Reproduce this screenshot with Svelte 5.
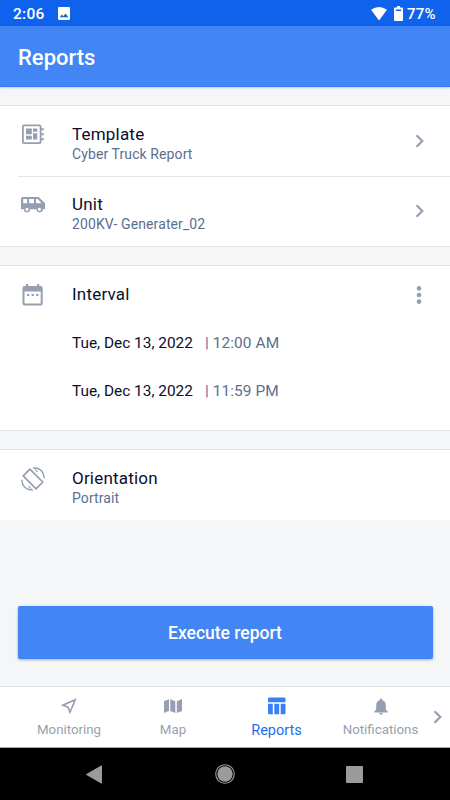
<script lang="ts">
    const tabs = [
        { id: 'monitoring', label: 'Monitoring' },
        { id: 'map', label: 'Map' },
        { id: 'reports', label: 'Reports' },
        { id: 'notifications', label: 'Notifications' },
    ];

    const interval = [
        { date: 'Tue, Dec 13, 2022', time: '12:00 AM' },
        { date: 'Tue, Dec 13, 2022', time: '11:59 PM' },
    ];

    let activeTab = $state('reports');
</script>

{#snippet chevron()}
    <svg class="chevron" width="10" height="14" viewBox="0 0 10 14">
        <path d="M1.5 1.2 7.3 7 1.5 12.8" fill="none" stroke="currentColor" stroke-width="2.2" />
    </svg>
{/snippet}

<div class="screen">
    <div class="status-bar">
        <span class="clock">2:06</span>
        <svg class="picture" width="12" height="13" viewBox="0 0 12 13">
            <path fill-rule="evenodd" fill="#fff" d="M1.3 0h9.4Q12 0 12 1.3v10.4q0 1.3-1.3 1.3H1.3Q0 13 0 11.7V1.3Q0 0 1.3 0ZM1.8 10.3h8.6L7.6 6.4 5.4 9.2 3.9 7.4Z" />
        </svg>
        <div class="status-right">
            <svg class="wifi" width="16" height="14" viewBox="0 0 16 14">
                <path fill="#fff" d="M0 2.8Q8-2.8 16 2.8L8 13.6Z" />
            </svg>
            <svg class="battery" width="9" height="15" viewBox="0 0 9 15">
                <path fill="#fff" fill-rule="evenodd" d="M3 0h3v1.4h2q1 0 1 1V14q0 1-1 1H1q-1 0-1-1V2.4q0-1 1-1h2ZM1.8 3.5V5h5.4V3.5Z" />
            </svg>
            <span class="charge">77%</span>
        </div>
    </div>

    <header class="header">
        <h1>Reports</h1>
    </header>

    <main class="content">
        <section class="card">
            <div class="row">
                <div class="row-icon">
                    <svg width="24" height="24" viewBox="0 0 24 24">
                        <path fill="none" stroke="currentColor" stroke-width="1.8" d="M2.9 2.4h15.7q1 0 1 1v15.7q0 1-1 1H2.9q-1 0-1-1V3.4q0-1 1-1Z" />
                        <path fill="currentColor" d="M5 5.6h5.8v5.6H5ZM12 5.6h4.3v3.2H12ZM5 12.8h5.8v3.6H5ZM12 10.2h4.3v6.2H12ZM20 5.2h2.8v2H20ZM20 10.2h2.8v2H20ZM20 15.2h2.8v2H20Z" />
                    </svg>
                </div>
                <div class="row-text">
                    <div class="title">Template</div>
                    <div class="subtitle">Cyber Truck Report</div>
                </div>
                {@render chevron()}
            </div>
            <div class="divider"></div>
            <div class="row">
                <div class="row-icon">
                    <svg width="24" height="24" viewBox="0 0 24 24">
                        <path fill="currentColor" fill-rule="evenodd" d="M2 4h15.5L24 10v6.3h-2.2a3 3 0 0 1-6 0H9a3 3 0 0 1-6 0H0V6q0-2 2-2ZM2.2 6v4.3h4V6ZM8.2 6v4.3H13V6ZM15 6v4.3h5.6L16.8 6Z" />
                        <circle cx="6" cy="16.3" r="2.3" fill="#fff" stroke="currentColor" stroke-width="1.4" />
                        <circle cx="18.4" cy="16.3" r="2.3" fill="#fff" stroke="currentColor" stroke-width="1.4" />
                    </svg>
                </div>
                <div class="row-text">
                    <div class="title">Unit</div>
                    <div class="subtitle">200KV- Generater_02</div>
                </div>
                {@render chevron()}
            </div>
        </section>

        <section class="card interval">
            <div class="row interval-head">
                <div class="row-icon">
                    <svg width="24" height="24" viewBox="0 0 24 24">
                        <path fill="currentColor" fill-rule="evenodd" d="M5 1h2.2v2h8.8V1h2.2v2h1.5q2 0 2 2v15.5q0 2-2 2H3.5q-2 0-2-2V5q0-2 2-2H5ZM3.5 8.5v12h16.2v-12Z" />
                        <path fill="currentColor" d="M6 11.1h2.2v2H6ZM10.6 11.1h2.2v2h-2.2ZM15.2 11.1h2.2v2h-2.2Z" />
                    </svg>
                </div>
                <div class="row-text">
                    <div class="title">Interval</div>
                </div>
                <svg class="more" width="6" height="20" viewBox="0 0 6 20">
                    <circle cx="3" cy="3.4" r="2.3" fill="currentColor" />
                    <circle cx="3" cy="10" r="2.3" fill="currentColor" />
                    <circle cx="3" cy="16.6" r="2.3" fill="currentColor" />
                </svg>
            </div>
            {#each interval as moment}
                <div class="moment">
                    <span class="date">{moment.date}</span>
                    <span class="time">| {moment.time}</span>
                </div>
            {/each}
        </section>

        <section class="card last">
            <div class="row">
                <div class="row-icon">
                    <svg width="24" height="24" viewBox="0 0 24 24">
                        <g fill="none" stroke="currentColor" stroke-width="1.4">
                            <path stroke-width="1.7" d="M8.9 2.1 21.8 15 15.1 21.8 2.2 8.9Z" stroke-linejoin="round" />
                            <path d="M12.2.8Q22.5 1 23.3 11.2" />
                            <path d="M11.8 23.2Q1.5 23 .7 12.8" />
                        </g>
                        <path fill="currentColor" d="M12 0 17 4.4l-1 1ZM12 24 7 19.6l1-1Z" />
                    </svg>
                </div>
                <div class="row-text">
                    <div class="title">Orientation</div>
                    <div class="subtitle">Portrait</div>
                </div>
            </div>
        </section>

        <button class="execute">Execute report</button>
    </main>

    <nav class="tabs">
        {#each tabs as tab (tab.id)}
            <button class="tab" class:active={activeTab === tab.id} onclick={() => (activeTab = tab.id)}>
                <span class="tab-icon">
                    {#if tab.id === 'monitoring'}
                        <svg width="16" height="16" viewBox="0 0 16 16">
                            <path fill="none" stroke="currentColor" stroke-width="1.6" d="M14.2 1.8 1.8 7.2 7 9.2 9 14.3Z" />
                        </svg>
                    {:else if tab.id === 'map'}
                        <svg width="18" height="16" viewBox="0 0 18 16">
                            <path fill="currentColor" d="M0 3.2 5 1.3v11.5L0 15ZM6.3 1.3l5 1.9V15l-5-2.1ZM12.8 3.2 18 1v12l-5.2 2Z" />
                        </svg>
                    {:else if tab.id === 'reports'}
                        <svg width="18" height="18" viewBox="0 0 18 18">
                            <path fill="currentColor" d="M1.3.5h14.9q1.3 0 1.3 1.3v3.4H0V1.8Q0 .5 1.3.5ZM0 6.7h4.8v10.5H1.3Q0 17.2 0 15.9ZM6.3 6.7h4.9v10.5H6.3ZM12.7 6.7h4.8v9.2q0 1.3-1.3 1.3h-3.5Z" />
                        </svg>
                    {:else}
                        <svg width="14" height="17" viewBox="0 0 14 17">
                            <path fill="currentColor" d="M5.8 2.2V1.6a1.2 1.2 0 0 1 2.4 0v.6q3.6.8 3.6 5v4.3l1.9 2v.9H.3v-.9l1.9-2V7.2q0-4.2 3.6-5ZM5.3 15h3.4a1.7 1.7 0 0 1-3.4 0Z" />
                        </svg>
                    {/if}
                </span>
                <span class="tab-label">{tab.label}</span>
            </button>
        {/each}
        <div class="tabs-more">
            {@render chevron()}
        </div>
    </nav>

    <div class="system-nav">
        <svg width="16" height="19" viewBox="0 0 16 19">
            <path fill="#9b9b9b" d="M15.2.6q.8-.4.8.6v16.6q0 1-.8.6L.5 10.1Q-.5 9.5.5 8.9Z" />
        </svg>
        <svg class="home" width="20" height="20" viewBox="0 0 20 20">
            <circle cx="10" cy="10" r="9.3" fill="none" stroke="#9b9b9b" stroke-width="1.1" />
            <circle cx="10" cy="10" r="7.7" fill="#9b9b9b" />
        </svg>
        <svg width="17" height="17" viewBox="0 0 17 17">
            <rect width="17" height="17" rx="1" fill="#9b9b9b" />
        </svg>
    </div>
</div>

<style>
    :global(body) {
        margin: 0;
    }

    .screen {
        display: flex;
        flex-direction: column;
        width: 450px;
        height: 800px;
        overflow: hidden;
        box-sizing: border-box;
        background: #f5f6f8;
        color: #0a0e2c;
        font-family: Roboto, "Liberation Sans", sans-serif;
    }

    svg {
        display: block;
        flex: none;
    }

    button {
        border: 0;
        padding: 0;
        font-family: inherit;
    }

    .status-bar {
        display: flex;
        align-items: center;
        flex: none;
        height: 26px;
        padding: 1px 13px 0;
        box-sizing: border-box;
        background: #0e62eb;
        color: #fff;
        font-size: 15.5px;
        font-weight: 500;
    }

    .clock {
        width: 45px;
        letter-spacing: 0.3px;
    }

    .status-right {
        display: flex;
        align-items: center;
        margin-left: auto;
    }

    .wifi {
        margin-right: 1px;
    }

    .battery {
        margin: 0 4px 0 6px;
    }

    .charge {
        width: 30px;
        font-size: 15px;
        letter-spacing: 0.2px;
        white-space: nowrap;
    }

    .header {
        display: flex;
        align-items: center;
        flex: none;
        height: 61px;
        padding: 3px 18px 0;
        box-sizing: border-box;
        background: #4286f5;
        border-bottom: 1px solid #2f7cf6;
        box-shadow: 0 1px 2px rgba(0, 0, 0, 0.18);
        color: #fff;
    }

    h1 {
        margin: 0;
        font-size: 22px;
        font-weight: 500;
    }

    .content {
        display: flex;
        flex-direction: column;
        flex: 1;
        padding-top: 18px;
    }

    .card {
        margin-bottom: 18px;
        background: #fff;
        border-top: 1px solid #dfe1e5;
        border-bottom: 1px solid #e4e6ea;
    }

    .card.last {
        margin-bottom: 0;
        border-bottom: 0;
    }

    .row {
        display: flex;
        height: 70px;
        padding: 17px 25px 0 21px;
        box-sizing: border-box;
        color: #959fb0;
    }

    .row-icon {
        width: 51px;
    }

    .row-text {
        flex: 1;
    }

    .title {
        color: #0a0e2c;
        font-size: 17px;
        line-height: 22px;
        letter-spacing: 0.2px;
    }

    .subtitle {
        color: #5b6f8e;
        font-size: 14px;
        line-height: 18px;
        letter-spacing: 0.1px;
    }

    .row .chevron {
        margin-top: 11px;
    }

    .divider {
        height: 1px;
        margin: 0 0 -1px 18px;
        background: #e2e5ea;
    }

    .interval {
        height: 164px;
    }

    .interval-head {
        height: 53px;
    }

    .more {
        margin: 2px 3px 0 0;
    }

    .moment {
        display: flex;
        height: 47.5px;
        padding-left: 72px;
        font-size: 15.4px;
        line-height: 48px;
    }

    .date {
        width: 133px;
    }

    .time {
        color: #5b6f8e;
        letter-spacing: 0.1px;
    }

    .execute {
        height: 53px;
        margin: auto 17.5px 27px;
        border-radius: 2px;
        background: #4286f5;
        box-shadow: 0 1px 3px rgba(0, 0, 0, 0.3);
        color: #fff;
        font-size: 17.5px;
        font-weight: 500;
    }

    .tabs {
        display: grid;
        grid-template-columns: 104px 104px 103px 105px 1fr;
        flex: none;
        height: 62px;
        padding-left: 17px;
        box-sizing: border-box;
        background: #fff;
        border-top: 1px solid #dde3ea;
        border-bottom: 1px solid #a8a8a8;
    }

    .tab {
        display: flex;
        flex-direction: column;
        align-items: center;
        background: none;
        color: #959fb0;
        font-size: 13.3px;
    }

    .tab-icon {
        display: flex;
        align-items: center;
        justify-content: center;
        height: 38px;
    }

    .tab-label {
        line-height: 18px;
        margin-top: -4px;
    }

    .tab.active {
        color: #1a6ff2;
        font-size: 14.5px;
    }

    .tab.active .tab-icon {
        color: #3a80f5;
    }

    .tab.active .tab-label {
        margin-top: -3px;
    }

    .tabs-more {
        display: flex;
        align-items: center;
        color: #959fb0;
    }

    .system-nav {
        display: flex;
        align-items: center;
        justify-content: space-between;
        flex: none;
        height: 52px;
        padding: 0 87px 0 86px;
        box-sizing: border-box;
        background: #000;
    }

    .home {
        margin-left: 2px;
    }
</style>
